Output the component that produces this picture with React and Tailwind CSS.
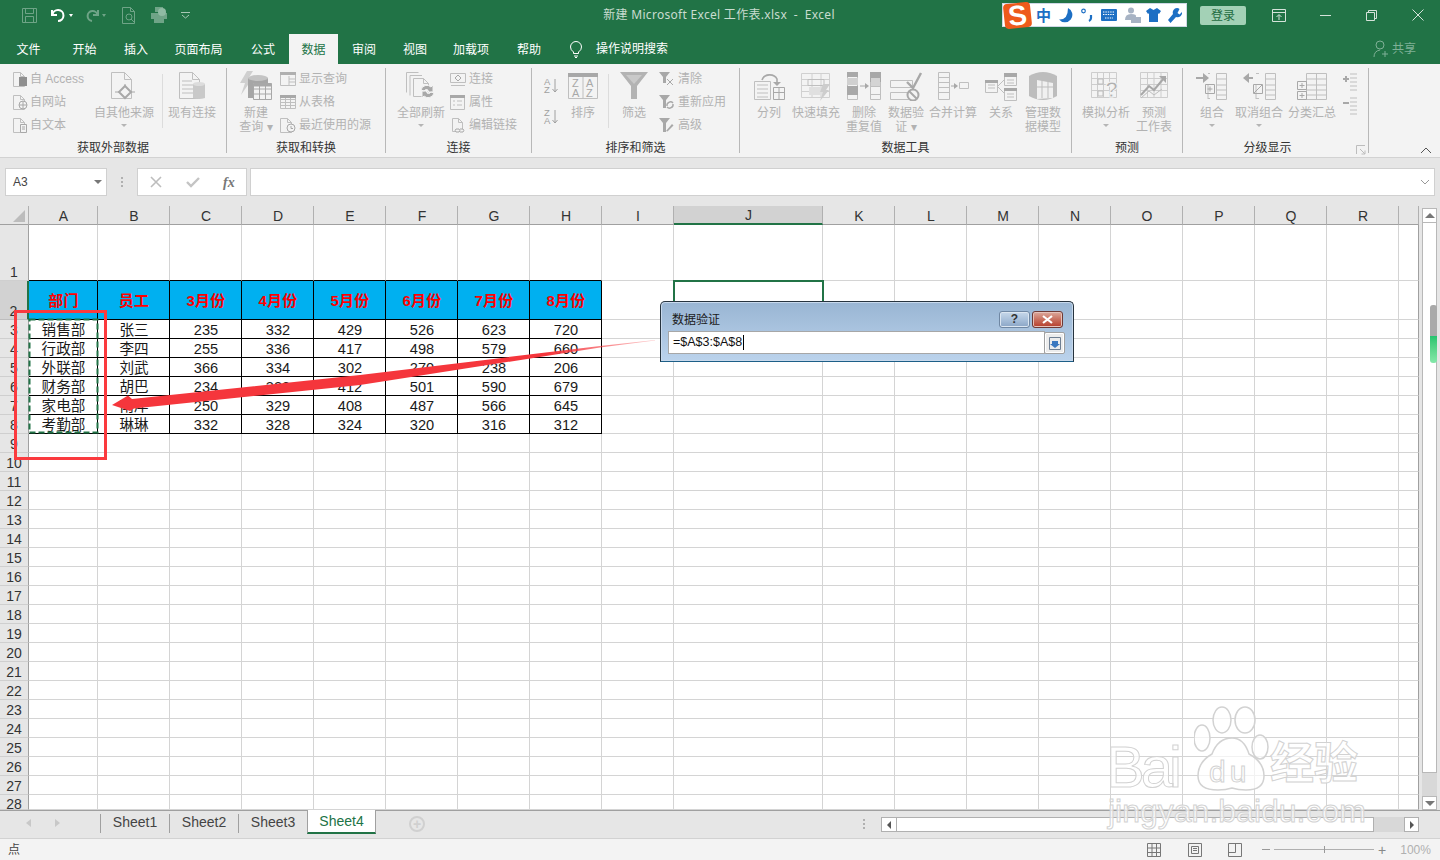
import React from "react";

const Ic = ({ w, h, children, className = "" }) => (
  <svg width={w} height={h} viewBox={`0 0 ${w} ${h}`} fill="none" stroke="#bfbfbf" className={className}>
    {children}
  </svg>
);

const Doc = ({ x = 0, y = 0, w = 10, h = 14, f = 4 }) => (
  <path d={`M${x + 0.5} ${y + 0.5}h${w - f}l${f} ${f}v${h - f}h-${w}zM${x + w - f + 0.5} ${y + 0.5}v${f}h${f}`} />
);

const ICONS = {
  access: (
    <Ic w={15} h={16}>
      <Doc y={1} w={11} h={14} />
      <rect x="6" y="6" width="8" height="9" fill="#8f8f8f" stroke="none" />
    </Ic>
  ),
  web: (
    <Ic w={15} h={16}>
      <Doc y={1} w={11} h={14} />
      <circle cx="10" cy="11" r="4" fill="#f3f3f3" stroke="#a8a8a8" />
      <path d="M6 11h8M10 7v8" stroke="#a8a8a8" />
    </Ic>
  ),
  text: (
    <Ic w={15} h={16}>
      <Doc y={1} w={11} h={14} />
      <path d="M7.500 7.500h6v8h-6zM9 10h3M9 12h3" fill="#f3f3f3" stroke="#a8a8a8" />
    </Ic>
  ),
  other: (
    <Ic w={28} h={28}>
      <Doc x={1} w={20} h={26} f={7} />
      <path d="M5 20h20M15 12v15" stroke="#a8a8a8" />
      <path d="M15 14l6 6-6 6-6-6z" fill="#f3f3f3" stroke="#a8a8a8" strokeWidth="2" />
    </Ic>
  ),
  existing: (
    <Ic w={28} h={28}>
      <Doc x={1} w={20} h={26} f={7} />
      <path d="M4 9h10M4 13h14M4 17h14M4 21h14" />
      <path d="M15 12h12v14q-6 2-12 0z" fill="#c9c9c9" stroke="none" />
      <ellipse cx="21" cy="12" rx="6" ry="2" fill="#dcdcdc" stroke="none" />
    </Ic>
  ),
  query: (
    <Ic w={34} h={30}>
      <path d="M8 0h6l-5 8h4L2 24l4-12H1z" fill="#cfcfcf" stroke="none" />
      <path d="M9 7h20v20H9z" fill="#a6a6a6" stroke="none" />
      <ellipse cx="19" cy="7" rx="10" ry="3" fill="#c4c4c4" stroke="none" />
      <path d="M14.500 12.500h18v16h-18zM14.500 18h18M14.500 23h18M20.500 12.500v16M26.500 12.500v16" fill="#f3f3f3" stroke="#a8a8a8" />
      <path d="M14.500 12.500h18v3h-18z" fill="#a8a8a8" stroke="none" />
    </Ic>
  ),
  show: (
    <Ic w={16} h={16}>
      <path d="M.5 1.500h15v13H.5zM9 5v9M9 8h6M9 11h6" />
      <path d="M0 1h16v3H0z" fill="#b0b0b0" stroke="none" />
    </Ic>
  ),
  table: (
    <Ic w={16} h={16}>
      <path d="M.5 1.500h15v13H.5zM.5 5.500h15M.5 8.500h15M.5 11.500h15M5.500 1.500v13M10.500 1.500v13" />
      <path d="M0 1h16v3H0z" fill="#a8a8a8" stroke="none" />
    </Ic>
  ),
  recent: (
    <Ic w={16} h={16}>
      <Doc y={1} w={11} h={14} />
      <circle cx="11" cy="11" r="4" fill="#f3f3f3" stroke="#a8a8a8" />
      <path d="M11 9v2.500h2" stroke="#a8a8a8" />
    </Ic>
  ),
  refresh: (
    <Ic w={32} h={30}>
      <path d="M1.500 1.500h12M1.500 1.500v20M5 4.500h12M5 4.500v20" />
      <Doc x={8} y={7} w={15} h={18} f={5} />
      <path d="M16 19a6 6 0 0 1 10-3l2-2v7h-7l2-2a3 3 0 0 0-4 1z M29 22a6 6 0 0 1-10 3l-2 2v-7h7l-2 2a3 3 0 0 0 4-1z" fill="#a8a8a8" stroke="#f3f3f3" />
    </Ic>
  ),
  conn: (
    <Ic w={16} h={16}>
      <path d="M.5 2.500h15v9H.5zM1 14.500h14" />
      <path d="M8 4l3 3-3 3-3-3z" stroke="#a8a8a8" />
    </Ic>
  ),
  prop: (
    <Ic w={16} h={16}>
      <path d="M.5 1.500h14v14H.5zM3 7h2M7 7h5M3 11h2M7 11h5" />
      <path d="M0 1h15v3H0z" fill="#a8a8a8" stroke="none" />
    </Ic>
  ),
  edit: (
    <Ic w={16} h={16}>
      <Doc x={2} y={1} w={10} h={13} />
      <path d="M6 12h3a2 2 0 0 1 0 3H6a2 2 0 0 1 0-3zM10 12h3a2 2 0 0 1 0 3h-3" fill="#f3f3f3" stroke="#a8a8a8" />
    </Ic>
  ),
  sort: (
    <Ic w={30} h={26}>
      <path d="M.5 2.500h29v23H.5zM15 2.500v23" />
      <path d="M0 0h30v4H0z" fill="#a8a8a8" stroke="none" />
      <text x="4" y="14" fontSize="11" fill="#a8a8a8" stroke="none" fontFamily="Liberation Sans">Z</text>
      <text x="18" y="14" fontSize="11" fill="#a8a8a8" stroke="none" fontFamily="Liberation Sans">A</text>
      <text x="4" y="24" fontSize="11" fill="#a8a8a8" stroke="none" fontFamily="Liberation Sans">A</text>
      <text x="18" y="24" fontSize="11" fill="#a8a8a8" stroke="none" fontFamily="Liberation Sans">Z</text>
    </Ic>
  ),
  funnel: (
    <Ic w={28} h={28}>
      <path d="M0 0h28L17 14v13h-6V14z" fill="#b3b3b3" stroke="none" />
      <path d="M6 3h16l-8 9z" fill="#c9c9c9" stroke="none" />
    </Ic>
  ),
  clear: (
    <Ic w={16} h={16}>
      <path d="M0 1h11L7 6v6H4V6z" fill="#a8a8a8" stroke="none" />
      <path d="M8 8l6 6M14 8l-6 6" stroke="#a8a8a8" />
    </Ic>
  ),
  reapply: (
    <Ic w={16} h={16}>
      <path d="M0 1h11L7 6v8H4V6z" fill="#a8a8a8" stroke="none" />
      <path d="M8 12a3.500 3.500 0 0 1 6-3M14 10a3.500 3.500 0 0 1-6 3" stroke="#a8a8a8" strokeWidth="1.400" />
    </Ic>
  ),
  advanced: (
    <Ic w={16} h={16}>
      <path d="M0 1h11L7 6v9H4V6z" fill="#a8a8a8" stroke="none" />
      <path d="M7 14l6-7 1.500 1.500-6 6z" fill="#a8a8a8" stroke="none" />
    </Ic>
  ),
  split: (
    <Ic w={32} h={30}>
      <path d="M1.500 10.500h16v18h-16zM4 14h11M4 18h11M4 22h11M4 26h11" />
      <path d="M20.500 16.500h11v12h-11zM20.500 21.500h11M26 16.500v12" stroke="#a8a8a8" />
      <path d="M9 9a8 7 0 0 1 15-1v4" stroke="#a8a8a8" strokeWidth="1.600" />
      <path d="M20 11l4 4 4-4z" fill="#a8a8a8" stroke="none" />
    </Ic>
  ),
  flash: (
    <Ic w={30} h={30}>
      <path d="M.5 2.500h28v24H.5zM.5 8.500h28M.5 14.500h28M.5 20.500h28M11 2.500v24M20 2.500v24" stroke="#d0d0d0" />
      <path d="M7 8.500h16v6H7z" stroke="#bfbfbf" />
      <path d="M8 16h14v8H8z" fill="#e0e0e0" stroke="none" />
      <path d="M22 13h7l-4 6h3l-9 11 3-9h-3z" fill="#cdcdcd" stroke="none" />
    </Ic>
  ),
  dedupe: (
    <Ic w={34} h={28}>
      <path d="M.5.500h10v27H.5zM23.500.500h10v27h-10zM23.500 5.500h10M23.500 14.500h10M23.500 22.500h10" />
      <path d="M0 0h11v5H0zM0 14h11v9H0zM23 0h11v5H23zM23 5h11v5H23z" fill="#a8a8a8" stroke="none" />
      <path d="M0 6h11v7H0z" fill="#d0d0d0" stroke="none" />
      <path d="M24 6h9v8h-9z" fill="#d4d4d4" stroke="none" />
      <path d="M13 14h6" stroke="#a8a8a8" />
      <path d="M18 11l4 3-4 3z" fill="#a8a8a8" stroke="none" />
    </Ic>
  ),
  validate: (
    <Ic w={34} h={30}>
      <path d="M1.500 9.500h22v7h-22zM1.500 21.500h18v7h-18z" />
      <path d="M18 11l6 6L32 2" stroke="#a8a8a8" strokeWidth="2.400" />
      <circle cx="24" cy="24" r="5.500" stroke="#a8a8a8" strokeWidth="2" fill="#f3f3f3" />
      <path d="M20 20l8 8" stroke="#a8a8a8" strokeWidth="2" />
    </Ic>
  ),
  merge: (
    <Ic w={32} h={28}>
      <path d="M1.500.500h11v27h-11zM1.500 5.500h11M1.500 10.500h11M1.500 15.500h11M1.500 20.500h11M22.500 10.500h9v6h-9z" />
      <path d="M14 14h4" stroke="#a8a8a8" />
      <path d="M17 11l4 3-4 3z" fill="#a8a8a8" stroke="none" />
    </Ic>
  ),
  relation: (
    <Ic w={32} h={29}>
      <path d="M.5 9.500h12v11H.5zM19.500 2.500h12v11h-12zM19.500 17.500h12v11h-12zM3 13h7M3 16h7M22 8h7M22 11h7M22 22h7M22 25h7M13 14l6-6M13 15l6 6" />
      <path d="M19 1h13v4H19zM19 16h13v3H19zM0 8h13v3H0z" fill="#a8a8a8" stroke="none" />
    </Ic>
  ),
  model: (
    <Ic w={30} h={30}>
      <path d="M1 5q14-8 28 0v20q-14 8-28 0z" fill="#bdbdbd" stroke="none" />
      <path d="M9 9l16 3v15l-16 1z" fill="#f0f0f0" stroke="none" />
      <path d="M9 16h16M14 9v18M20 11v16" stroke="#bdbdbd" />
    </Ic>
  ),
  whatif: (
    <Ic w={30} h={30}>
      <path d="M.5 1.500h25v25H.5zM.5 7.500h25M.5 13.500h25M.5 19.500h25M6.500 1.500v25M12.500 1.500v25M18.500 1.500v25" stroke="#cdcdcd" />
      <rect x="7" y="8" width="5" height="5" stroke="#bdbdbd" />
      <rect x="7" y="20" width="5" height="5" stroke="#bdbdbd" />
      <text x="14" y="26" fontSize="22" fontWeight="700" fill="#b0b0b0" stroke="#f3f3f3" fontFamily="Liberation Sans">?</text>
    </Ic>
  ),
  forecast: (
    <Ic w={30} h={30}>
      <path d="M1.500 1.500h27v25h-27zM1.500 7.500h27M1.500 13.500h27M1.500 19.500h27M8.500 1.500v25M15 1.500v25M22 1.500v25" stroke="#cdcdcd" />
      <path d="M2 24l8-9 5 4 10-12" stroke="#a8a8a8" strokeWidth="2" />
      <path d="M20 5h7v7z" fill="#a8a8a8" stroke="none" />
      <path d="M2 27l8-7 5 4 8-6" stroke="#bdbdbd" />
    </Ic>
  ),
  group: (
    <Ic w={32} h={28}>
      <path d="M0 6h8" stroke="#a8a8a8" strokeWidth="2" />
      <path d="M7 1l6 5-6 5z" fill="#a8a8a8" stroke="none" />
      <path d="M14 1.500h-2M14 26.500h-2M12 12v15M20.500 1.500h10v26h-10zM20.500 7h10M20.500 13h10M20.500 18h10M20.500 23h10" />
      <path d="M9.500 12.500h9v9h-9zM14 14.500v5M11.500 17h5" stroke="#a8a8a8" />
    </Ic>
  ),
  ungroup: (
    <Ic w={33} h={28}>
      <path d="M10 6H3" stroke="#a8a8a8" strokeWidth="2" />
      <path d="M6 1L0 6l6 5z" fill="#a8a8a8" stroke="none" />
      <path d="M16 1.500h-3M16 26.500h-3M13 12v15M22.500 1.500h10v26h-10zM22.500 7h10M22.500 13h10M22.500 18h10M22.500 23h10" />
      <path d="M10.500 12.500h9v9h-9zM11 21l8-8" stroke="#a8a8a8" />
    </Ic>
  ),
  subtotal: (
    <Ic w={30} h={28}>
      <path d="M9.500 1.500h20v26h-20zM9.500 7h20M9.500 13h20M9.500 18h20M9.500 23h20M19.500 1.500v26" />
      <path d="M.5 9.500h9v8h-9zM.5 19.500h9v8h-9zM5 11v5M2.500 13.500h5M5 21v5M2.500 23.500h5" stroke="#a8a8a8" />
    </Ic>
  ),
  plusLines: (
    <Ic w={16} h={18}>
      <path d="M1 6h6M4 3v6" stroke="#a8a8a8" strokeWidth="2" />
      <path d="M8 1h7M8 5h7M8 9h7M8 13h7M8 17h7" />
    </Ic>
  ),
  minusLines: (
    <Ic w={16} h={18}>
      <path d="M1 6h6" stroke="#a8a8a8" strokeWidth="2" />
      <path d="M8 1h7M8 5h7M8 9h7M8 13h7M8 17h7" />
    </Ic>
  ),
};

const Caret = () => <span className="mt-[4px] h-0 w-0 border-x-[3px] border-t-[3px] border-x-transparent border-t-[#b5b5b5]" />;

function Big({ icon, lines, caret, className }) {
  return (
    <div className={`flex shrink-0 flex-col items-center ${className}`}>
      <div className="flex h-[32px] items-center justify-center">{ICONS[icon]}</div>
      <div className="mt-[4px] flex flex-col items-center text-[12px] leading-[14px] whitespace-nowrap">
        {lines.map((l) => (
          <span key={l}>{l}</span>
        ))}
        {caret && <Caret />}
      </div>
    </div>
  );
}

function Small({ items, className = "", gap = "gap-[3px]" }) {
  return (
    <div className={`flex shrink-0 flex-col gap-[5px] ${className}`}>
      {items.map(([icon, label]) => (
        <div key={label} className={`flex h-[18px] items-center whitespace-nowrap text-[12px] ${gap}`}>
          <span className="flex w-[16px] items-center">{ICONS[icon]}</span>
          {label}
        </div>
      ))}
    </div>
  );
}

function Group({ label, className, children }) {
  return (
    <div className={`flex h-[85px] shrink-0 flex-col border-r border-[#b8b8b8] pt-[2px] ${className}`}>
      <div className="flex h-[71px] shrink-0">{children}</div>
      <div className="shrink-0 text-center text-[12px] leading-[14px] text-[#333]">{label}</div>
    </div>
  );
}

const Bar = ({ className }) => <div className={`h-[54px] w-px shrink-0 bg-[#dcdcdc] ${className}`} />;

const SortKey = ({ top, bottom }) => (
  <div className="relative h-[16px] font-['Liberation_Sans'] text-[9.500px] leading-[8px] text-[#a0a0a0]">
    {top}
    <br />
    {bottom}
    <svg width="6" height="14" fill="none" stroke="#a0a0a0" className="absolute left-[8px] top-[1px]">
      <path d="M3 0v13M.5 10L3 13l2.500-3" />
    </svg>
  </div>
);

function Ribbon() {
  return (
    <div className="relative flex h-[94px] shrink-0 border-b border-[#d2d2d2] bg-[#f3f3f3] pt-[4px] text-[#b2b2b2]">
      <Group label="获取外部数据" className="w-[227px]">
        <Small
          className="ml-[13px] w-[81px]"
          gap="gap-[1px]"
          items={[["access", "自 Access"], ["web", "自网站"], ["text", "自文本"]]}
        />
        <Big icon="other" lines={["自其他来源"]} caret className="w-[60px]" />
        <Bar className="ml-[8px] mt-[4px]" />
        <Big icon="existing" lines={["现有连接"]} className="w-[58px]" />
      </Group>
      <Group label="获取和转换" className="w-[159px]">
        <Big icon="query" lines={["新建", "查询 ▾"]} className="ml-[12px] w-[34px]" />
        <Small
          className="ml-[7px]"
          items={[["show", "显示查询"], ["table", "从表格"], ["recent", "最近使用的源"]]}
        />
      </Group>
      <Group label="连接" className="w-[146px]">
        <Big icon="refresh" lines={["全部刷新"]} caret className="ml-[11px] w-[48px]" />
        <Small className="ml-[5px]" items={[["conn", "连接"], ["prop", "属性"], ["edit", "编辑链接"]]} />
      </Group>
      <Group label="排序和筛选" className="w-[208px]">
        <div className="ml-[12px] flex w-[14px] shrink-0 flex-col gap-[15px] pt-[8px]">
          <SortKey top="A" bottom="Z" />
          <SortKey top="Z" bottom="A" />
        </div>
        <Big icon="sort" lines={["排序"]} className="ml-[7px] w-[36px]" />
        <Bar className="ml-[7px] mt-[4px]" />
        <Big icon="funnel" lines={["筛选"]} className="w-[50px]" />
        <Small items={[["clear", "清除"], ["reapply", "重新应用"], ["advanced", "高级"]]} />
      </Group>
      <Group label="数据工具" className="w-[332px]">
        <Big icon="split" lines={["分列"]} className="ml-[6px] w-[46px]" />
        <Big icon="flash" lines={["快速填充"]} className="w-[48px]" />
        <Big icon="dedupe" lines={["删除", "重复值"]} className="ml-[4px] w-[40px]" />
        <Big icon="validate" lines={["数据验", "证 ▾"]} className="w-[44px]" />
        <Big icon="merge" lines={["合并计算"]} className="w-[50px]" />
        <Big icon="relation" lines={["关系"]} className="w-[46px]" />
        <Big icon="model" lines={["管理数", "据模型"]} className="w-[38px]" />
      </Group>
      <Group label="预测" className="w-[111px]">
        <Big icon="whatif" lines={["模拟分析"]} caret className="ml-[10px] w-[48px]" />
        <Big icon="forecast" lines={["预测", "工作表"]} className="w-[48px]" />
      </Group>
      <Group label="分级显示" className="w-[186px] pr-[16px]">
        <Big icon="group" lines={["组合"]} caret className="ml-[9px] w-[40px]" />
        <Big icon="ungroup" lines={["取消组合"]} caret className="ml-[3px] w-[48px]" />
        <Big icon="subtotal" lines={["分类汇总"]} className="ml-[5px] w-[48px]" />
        <div className="ml-[6px] flex flex-col gap-[6px] pt-[3px]">
          {ICONS.plusLines}
          {ICONS.minusLines}
        </div>
      </Group>
      <svg width="10" height="10" className="absolute left-[1356px] top-[81px]" fill="none" stroke="#bdbdbd">
        <path d="M.5 9V.5H9M4 4l5 5M9 5.500V9H5.500" />
      </svg>
      <svg width="12" height="7" className="absolute left-[1420px] top-[83px]" fill="none" stroke="#555">
        <path d="M1 6l5-5 5 5" />
      </svg>
    </div>
  );
}

function ImeBar() {
  return (
    <div className="relative ml-[167px] flex h-[24px] w-[185px] items-center border border-[#cfd8e6] bg-white pl-[33px] text-[#1d6fc4]">
      <div className="absolute left-[1px] top-[-1px] flex h-[25px] w-[27px] -rotate-6 items-center justify-center rounded-[4px] bg-[#ee5a1b] font-['Liberation_Sans'] text-[28px] font-bold leading-none text-white">
        S
      </div>
      <span className="w-[23px] text-[15px] font-bold leading-none">中</span>
      <svg width="14" height="15" viewBox="0 0 14 15" className="mr-[8px]">
        <path d="M9 0a7.500 7.500 0 1 1-9 11.500Q9 12 9 0z" fill="#1d6fc4" />
      </svg>
      <svg width="12" height="14" viewBox="0 0 12 14" className="mr-[8px]" fill="none" stroke="#1d6fc4">
        <circle cx="2.500" cy="3" r="1.800" strokeWidth="1.200" />
        <path d="M10 7v3q0 2-2 3" strokeWidth="2.200" />
      </svg>
      <svg width="16" height="12" viewBox="0 0 16 12" className="mr-[8px]">
        <rect width="16" height="12" rx="1" fill="#1d6fc4" />
        <path d="M2 3h12M2 5.500h12M4 9h8" stroke="#fff" strokeWidth="1.200" strokeDasharray="1.400 1" />
      </svg>
      <svg width="16" height="16" viewBox="0 0 16 16" className="mr-[5px]">
        <circle cx="6" cy="3.500" r="3" fill="#a7b3c4" />
        <path d="M0 13q0-6 6-6t5 3H6v3z" fill="#a7b3c4" />
        <rect x="6" y="10" width="10" height="6" fill="#a7b3c4" />
      </svg>
      <svg width="15" height="14" viewBox="0 0 15 14" className="mr-[7px]">
        <path d="M4 0l3.500 2L11 0l4 3-2 3-1-.7V14H3V5.300L2 6 0 3z" fill="#1d6fc4" />
      </svg>
      <svg width="14" height="15" viewBox="0 0 14 15">
        <path d="M9 0a4.500 4.500 0 0 0-4 6L0 12l2.500 3 5.500-6a4.500 4.500 0 0 0 6-5l-2.500 2.500L9.500 5l2-4Q10.500 0 9 0z" fill="#1d6fc4" />
      </svg>
    </div>
  );
}

function TitleBar() {
  return (
    <div className="flex h-[34px] shrink-0 items-start bg-[#217346] pt-[3px] text-[#c9dcd0]">
      <div className="flex h-[24px] w-[603px] shrink-0 items-center pl-[22px]">
        <svg width="15" height="15" fill="none" stroke="#6fa487" className="mr-[13px]">
          <path d="M.5.500h14v14H.5zM3.500.500v5h8v-5M3.500 14.500v-6h8v6" />
        </svg>
        <svg width="17" height="15" viewBox="0 0 17 15" fill="none" stroke="#fff" strokeWidth="2" className="mr-[2px]">
          <path d="M2 2v5h5M2.500 7A5.500 5.500 0 1 1 8 13" />
        </svg>
        <span className="mr-[12px] h-0 w-0 border-x-[2px] border-t-[3px] border-x-transparent border-t-white" />
        <svg width="15" height="13" viewBox="0 0 15 13" fill="none" stroke="#6fa487" strokeWidth="2" className="mr-[2px]">
          <path d="M13 1v5H8M12.500 6A5 5 0 1 0 7 12" />
        </svg>
        <span className="mr-[16px] h-0 w-0 border-x-[2px] border-t-[3px] border-x-transparent border-t-[#6fa487]" />
        <svg width="15" height="17" fill="none" stroke="#6fa487" className="mr-[14px]">
          <path d="M.5.500h8l4 4v12H.5zM8.500.500v4h4" />
          <circle cx="7" cy="10" r="3" />
          <path d="M9 12l4 4" />
        </svg>
        <svg width="16" height="16" fill="#6fa487" className="mr-[14px]">
          <path d="M0 6h16v6h-3v4H3v-4H0z" />
          <path d="M4 0h8v5H4z" />
          <circle cx="11" cy="5" r="4" fill="#8fbba3" />
        </svg>
        <svg width="9" height="7" fill="none" stroke="#a8c8b5">
          <path d="M0 .5h9M1 3l3.500 3L8 3" />
        </svg>
      </div>
      <div className="h-[24px] w-[232px] shrink-0 whitespace-pre text-center font-['Noto_Sans','Noto_Sans_CJK_SC',sans-serif] text-[12px] leading-[24px] tracking-[0.3px]">
        新建 Microsoft Excel 工作表.xlsx  -  Excel
      </div>
      <ImeBar />
      <div className="ml-[13px] mt-[3px] flex h-[19px] w-[46px] items-center justify-center rounded-[2px] bg-[#a3d1b6] text-[12px] text-[#1f6b41]">
        登录
      </div>
      <svg width="14" height="13" fill="none" stroke="#d5e3da" className="ml-[26px] mt-[6px]">
        <path d="M.5.500h13v12H.5zM.5 3.500h13M7 11V6M4.500 8L7 5.500 9.500 8" />
      </svg>
      <div className="ml-[34px] mt-[12px] h-px w-[11px] bg-[#d5e3da]" />
      <svg width="11" height="11" fill="none" stroke="#d5e3da" className="ml-[35px] mt-[7px]">
        <path d="M.5 2.500h8v8h-8zM2.500 2V.5h8v8H9" />
      </svg>
      <svg width="12" height="12" fill="none" stroke="#d5e3da" className="ml-[35px] mt-[6px]">
        <path d="M.5.500l11 11M11.500.500l-11 11" />
      </svg>
    </div>
  );
}

const TABS = [
  ["文件", "w-[57px]"],
  ["开始", "w-[55px]"],
  ["插入", "w-[48px]"],
  ["页面布局", "w-[77px]"],
  ["公式", "w-[52px]"],
  ["数据", "w-[49px]"],
  ["审阅", "w-[52px]"],
  ["视图", "w-[50px]"],
  ["加载项", "w-[62px]"],
  ["帮助", "w-[54px]"],
];

function TabRow() {
  return (
    <div className="flex h-[30px] shrink-0 bg-[#217346] text-[12px] text-white">
      {TABS.map(([t, w]) => (
        <div
          key={t}
          className={`${w} flex items-center justify-center pt-[1px] ${t === "数据" ? "bg-[#f3f3f3] text-[#217346]" : ""}`}
        >
          {t}
        </div>
      ))}
      <div className="flex items-center pl-[14px]">
        <svg width="12" height="17" fill="none" stroke="#fff" className="mr-[14px]">
          <path d="M3.500 12.500V11Q.5 9 .5 6a5.500 5.500 0 0 1 11 0q0 3-3 5v1.500zM4 15h4M5 16.500h2" />
        </svg>
        操作说明搜索
      </div>
      <div className="ml-auto mr-[24px] flex items-center text-[12px] text-[#7fb096]">
        <svg width="16" height="18" fill="none" stroke="#7fb096" className="mr-[3px]">
          <circle cx="7" cy="5" r="4" />
          <path d="M1 17q0-6 6-7M9 14h6M12 11v6" />
        </svg>
        共享
      </div>
    </div>
  );
}

function FormulaBar() {
  return (
    <div className="flex h-[28px] shrink-0 items-center bg-[#e6e6e6] px-[5px] text-[#444]">
      <div className="flex h-[28px] w-[102px] items-center justify-between border border-[#d0d0d0] bg-white pl-[7px] pr-[4px] text-[12px]">
        A3
        <span className="h-0 w-0 border-x-[4px] border-t-[4px] border-x-transparent border-t-[#777]" />
      </div>
      <div className="mx-[14px] flex flex-col gap-[2px]">
        <span className="h-[2px] w-[2px] bg-[#b0b0b0]" />
        <span className="h-[2px] w-[2px] bg-[#b0b0b0]" />
        <span className="h-[2px] w-[2px] bg-[#b0b0b0]" />
      </div>
      <div className="flex h-[28px] w-[110px] items-center border border-[#d0d0d0] bg-white">
        <svg width="12" height="12" fill="none" stroke="#bdbdbd" strokeWidth="1.600" className="ml-[12px]">
          <path d="M1 1l10 10M11 1L1 11" />
        </svg>
        <svg width="14" height="12" fill="none" stroke="#c4c4c4" strokeWidth="2.400" className="ml-[24px]">
          <path d="M1 6l4 4 8-8" />
        </svg>
        <span className="ml-[23px] font-['Liberation_Serif'] text-[14px] font-bold italic text-[#777]">fx</span>
      </div>
      <div className="ml-[3px] flex h-[28px] flex-1 items-center justify-end border border-[#d0d0d0] bg-white pr-[4px]">
        <svg width="10" height="6" fill="none" stroke="#999">
          <path d="M1 1l4 4 4-4" />
        </svg>
      </div>
    </div>
  );
}

const LETTERS = "ABCDEFGHIJKLMNOPQR".split("");
const COLS = [...LETTERS, ""];
const DATA = {
  2: ["部门", "员工", "3月份", "4月份", "5月份", "6月份", "7月份", "8月份"],
  3: ["销售部", "张三", 235, 332, 429, 526, 623, 720],
  4: ["行政部", "李四", 255, 336, 417, 498, 579, 660],
  5: ["外联部", "刘武", 366, 334, 302, 270, 238, 206],
  6: ["财务部", "胡巴", 234, 323, 412, 501, 590, 679],
  7: ["家电部", "南岸", 250, 329, 408, 487, 566, 645],
  8: ["考勤部", "琳琳", 332, 328, 324, 320, 316, 312],
};

function Cell({ row, col }) {
  const inTable = row >= 2 && row <= 8 && col < 8;
  const aboveTable = row === 1 && col < 8;
  const selected = row === 2 && col === 9;
  const value = inTable ? DATA[row][col] : null;
  return (
    <div
      className={`flex items-center justify-center overflow-hidden border-b border-r pl-[1px] text-center leading-none whitespace-nowrap
        ${inTable ? "border-black" : "border-[#d4d4d4]"}
        ${aboveTable ? "border-b-black" : ""}
        ${col === 18 ? "border-r-[#a0a0a0]" : ""}
        ${row === 2 && col < 8 ? "bg-[#00b0f0] pt-[1px] text-[15px] font-bold tracking-[0.3px] text-[#ff0000]" : "pt-[2px] text-[14.600px] text-[#1a1a1a]"}
        ${selected ? "relative z-10 outline-2 -outline-offset-1 outline-[#217346]" : ""}`}
    >
      {value}
    </div>
  );
}

function Sheet() {
  const rows = Array.from({ length: 28 }, (_, i) => i + 1);
  return (
    <div className="grid grid-cols-[29px_69px_repeat(7,72px)_72px_149px_repeat(8,72px)_20px] grid-rows-[19px_56px_39px_repeat(25,19px)_15px] bg-white">
      <div className="relative border-b border-r border-b-[#a0a0a0] border-r-[#b0b0b0] bg-[#e6e6e6]">
        <div className="absolute right-[3px] top-[4px] h-0 w-0 border-b-[12px] border-l-[12px] border-b-[#bcbcbc] border-l-transparent" />
      </div>
      {COLS.map((l) => (
        <div
          key={l}
          className={`flex items-center justify-center border-r border-r-[#b0b0b0] pl-[1px] pt-[1px] text-[14px] leading-none text-[#333] ${
            l === "J" ? "border-b-2 border-b-[#217346] bg-[#d2d2d2]" : "border-b border-b-[#a0a0a0] bg-[#e6e6e6]"
          }`}
        >
          {l}
        </div>
      ))}
      {rows.map((r) => (
        <React.Fragment key={r}>
          <div
            className={`flex justify-center overflow-hidden border-b text-[14px] leading-[15px] text-[#333] ${
              r === 28 ? "items-start pt-[2px]" : "items-end"
            } ${
              r === 2
                ? "border-r-2 border-b-[#bdbdbd] border-r-[#217346] bg-[#d2d2d2]"
                : "border-r border-b-[#cfcfcf] border-r-[#a0a0a0] bg-[#e6e6e6]"
            }`}
          >
            {r}
          </div>
          {COLS.map((_, c) => (
            <Cell key={c} row={r} col={c} />
          ))}
        </React.Fragment>
      ))}
    </div>
  );
}

function VScroll() {
  return (
    <div className="flex w-[21px] flex-col bg-[#e6e6e6] pl-[3px] pr-[3px] pt-[2px]">
      <div className="flex h-[15px] items-center justify-center border border-[#b8b8b8] bg-white">
        <span className="h-0 w-0 border-x-[5px] border-b-[5px] border-x-transparent border-b-[#777]" />
      </div>
      <div className="h-[550px] border-x border-b border-[#b8b8b8] bg-white" />
      <div className="flex-1 bg-[#d8d8d8]" />
      <div className="flex h-[14px] items-center justify-center border border-[#b8b8b8] bg-white">
        <span className="h-0 w-0 border-x-[5px] border-t-[5px] border-x-transparent border-t-[#777]" />
      </div>
    </div>
  );
}

function TabBar() {
  return (
    <div className="flex h-[28px] shrink-0 border-t border-[#a0a0a0] bg-[#e6e6e6] text-[14px] text-[#444]">
      <div className="flex w-[100px] items-center pb-[4px] pl-[26px]">
        <span className="h-0 w-0 border-y-[4px] border-r-[5px] border-y-transparent border-r-[#c8c8c8]" />
        <span className="ml-[24px] h-0 w-0 border-y-[4px] border-l-[5px] border-y-transparent border-l-[#c8c8c8]" />
      </div>
      {["Sheet1", "Sheet2", "Sheet3"].map((s) => (
        <div key={s} className="mt-[3px] flex h-[19px] w-[69px] items-center justify-center border-l border-[#a0a0a0] pb-[3px]">
          {s}
        </div>
      ))}
      <div className="mt-[-1px] flex h-[24px] w-[69px] items-center justify-center border-x border-b-2 border-x-[#a0a0a0] border-b-[#217346] bg-white pt-[1px] text-[#217346]">
        Sheet4
      </div>
      <div className="ml-[33px] mt-[5px] flex h-[16px] w-[16px] items-center justify-center rounded-full border-2 border-[#d0d0d0] text-[14px] font-bold leading-none text-[#d0d0d0]">
        +
      </div>
      <div className="ml-[438px] mt-[8px] flex flex-col gap-[2px]">
        <span className="h-[2px] w-[2px] bg-[#b0b0b0]" />
        <span className="h-[2px] w-[2px] bg-[#b0b0b0]" />
        <span className="h-[2px] w-[2px] bg-[#b0b0b0]" />
      </div>
      <div className="ml-[16px] mt-[6px] flex h-[15px] w-[538px]">
        <div className="flex w-[16px] items-center justify-center border border-[#b0b0b0] bg-white">
          <span className="h-0 w-0 border-y-[4px] border-r-[4px] border-y-transparent border-r-[#555]" />
        </div>
        <div className="w-[477px] border-y border-r border-[#b0b0b0] bg-white" />
        <div className="flex-1 bg-[#d8d8d8]" />
        <div className="flex w-[15px] items-center justify-center border border-[#b0b0b0] bg-white">
          <span className="h-0 w-0 border-y-[4px] border-l-[4px] border-y-transparent border-l-[#555]" />
        </div>
      </div>
    </div>
  );
}

function StatusBar() {
  return (
    <div className="flex h-[22px] shrink-0 items-center border-t border-[#d2d2d2] bg-[#f3f3f3] pl-[8px] text-[12px] text-[#444]">
      点
      <svg width="14" height="14" fill="none" stroke="#777" className="ml-[1127px]">
        <path d="M.5.500h13v13H.5zM.5 5h13M.5 9.500h13M5 .500v13M9.500 .500v13" />
      </svg>
      <svg width="14" height="14" fill="none" stroke="#777" className="ml-[27px]">
        <path d="M.5.500h13v13H.5zM3.500 3.500h7v7h-7zM5 5.500h4M5 7.500h4" />
      </svg>
      <svg width="14" height="14" fill="none" stroke="#777" className="ml-[26px]">
        <path d="M.5.500h13v13H.5zM.5 9.500h7v-9" />
      </svg>
      <div className="ml-[20px] h-px w-[8px] bg-[#999]" />
      <div className="relative ml-[4px] h-px w-[100px] bg-[#b0b0b0]">
        <span className="absolute left-[50px] top-[-3px] h-[7px] w-px bg-[#999]" />
      </div>
      <span className="ml-[4px] text-[14px] leading-none text-[#888]">+</span>
      <span className="ml-[14px] text-[12px] text-[#b0b0b0]">100%</span>
    </div>
  );
}

function ValidationDialog() {
  return (
    <div className="absolute left-[660px] top-[301px] z-20 h-[61px] w-[414px] rounded-t-[5px] border border-[#27343f] border-b-[#1d5f88] bg-gradient-to-b from-[#99b5d3] to-[#bbd3ec] shadow-[inset_0_0_0_1px_#c8d9ec]">
      <div className="flex h-[29px] items-center">
        <span className="ml-[11px] mt-[6px] text-[12px] text-[#1a1a1a]">数据验证</span>
        <div className="ml-auto mr-[10px] mt-[5px] flex gap-[2px]">
          <div className="flex h-[17px] w-[31px] items-center justify-center rounded-[3px] border border-[#6f87a3] bg-gradient-to-b from-[#c7d8ea] via-[#a9c0da] to-[#8aa5c6] font-['Liberation_Sans'] text-[12px] font-bold leading-none text-[#333] shadow-[inset_0_0_0_1px_#dbe6f1]">
            ?
          </div>
          <div className="flex h-[17px] w-[31px] items-center justify-center rounded-[3px] border border-[#6e3a36] bg-gradient-to-b from-[#dba99d] via-[#c9705f] to-[#b53c2b] shadow-[inset_0_0_0_1px_#e6c2ba]">
            <svg width="11" height="9" fill="none" stroke="#fff" strokeWidth="2.200">
              <path d="M1 1l9 7M10 1L1 8" />
            </svg>
          </div>
        </div>
      </div>
      <div className="ml-[7px] flex h-[23px] w-[377px] items-center border border-[#a7a7a7] bg-white pl-[4px] text-[12.500px] leading-none text-[#111]">
        =$A$3:$A$8
        <span className="ml-[1px] h-[15px] w-px bg-black" />
      </div>
      <div className="absolute left-[383px] top-[30px] flex h-[22px] w-[21px] items-center justify-center rounded-[2px] border border-[#a0a0a0] bg-[#ececec] shadow-[inset_0_0_0_1px_#fff]">
        <svg width="12" height="13" fill="none" stroke="#6f7f92">
          <path d="M.5.500h11v12H.5z" />
          <path d="M3 4h6v3h2l-5 4-5-4h2z" fill="#3b78bf" stroke="none" />
        </svg>
      </div>
    </div>
  );
}

function Annotations() {
  return (
    <>
      <svg width="71" height="116" fill="none" className="absolute left-[28px] top-[318px] z-10">
        <rect x="1.500" y="1.500" width="68" height="113" stroke="#217346" strokeWidth="2" strokeDasharray="6 3" />
      </svg>
      <div className="absolute left-[14px] top-[310px] z-10 h-[150px] w-[93px] border-[3px] border-[#fb3a3e]" />
      <svg width="570" height="90" className="absolute left-[100px] top-[330px] z-10">
        <defs>
          <linearGradient id="fade" x1="0" x2="1" y1="0" y2="0">
            <stop offset="0.8" stopColor="#f5363c" />
            <stop offset="1" stopColor="#f5363c" stopOpacity="0.25" />
          </linearGradient>
        </defs>
        <polygon
          points="555,10 500,16 260,45 32,69 28,65.500 12,75 30,81 34,78.500 260,55 500,17.500 555,10.500"
          fill="url(#fade)"
        />
      </svg>
    </>
  );
}

function Watermark() {
  return (
    <div className="pointer-events-none absolute left-[1100px] top-[700px] z-10 h-[130px] w-[270px] font-['Liberation_Sans','Noto_Sans_CJK_SC',sans-serif] text-white/70 [-webkit-text-stroke:1px_#d2d2d2]">
      <span className="absolute left-[6px] top-[38px] text-[58px] leading-none tracking-[-4px]">Bai</span>
      <svg width="76" height="90" viewBox="0 0 76 90" className="absolute left-[94px] top-[4px]" fill="#ffffffb0" stroke="#d2d2d2" strokeWidth="1.500">
        <ellipse cx="28" cy="16" rx="9" ry="13" />
        <ellipse cx="51" cy="16" rx="10" ry="13" />
        <ellipse cx="8" cy="34" rx="8" ry="13" />
        <ellipse cx="66" cy="43" rx="8" ry="12" />
        <path d="M38 34q12 0 17 16 15 8 15 22 0 14-18 14-8 0-14-2-6 2-14 2-20 0-20-14 0-14 14-22 6-16 20-16z" />
      </svg>
      <span className="absolute left-[109px] top-[57px] text-[30px] leading-none tracking-[4px]">du</span>
      <span className="absolute left-[170px] top-[42px] text-[44px] font-bold leading-none">经验</span>
      <span className="absolute left-[8px] top-[95px] text-[32px] leading-none">jingyan.baidu.com</span>
    </div>
  );
}

function ScrollOverlay() {
  return (
    <div className="absolute left-[1430px] top-[305px] z-10 flex h-[58px] w-[7px] flex-col overflow-hidden rounded-[3px]">
      <div className="h-[31px] bg-[#a9a9a9]" />
      <div className="flex-1 bg-gradient-to-b from-[#22c46e] to-[#84e8aa]" />
    </div>
  );
}

export default function App() {
  return (
    <div className="relative flex h-[860px] w-[1440px] flex-col overflow-hidden bg-[#e6e6e6] font-['Liberation_Sans','Noto_Sans_CJK_SC',sans-serif]">
      <TitleBar />
      <TabRow />
      <Ribbon />
      <div className="h-[10px] shrink-0" />
      <FormulaBar />
      <div className="h-[10px] shrink-0" />
      <div className="flex h-[604px] shrink-0">
        <Sheet />
        <VScroll />
      </div>
      <TabBar />
      <StatusBar />
      <Annotations />
      <ValidationDialog />
      <ScrollOverlay />
      <Watermark />
    </div>
  );
}
